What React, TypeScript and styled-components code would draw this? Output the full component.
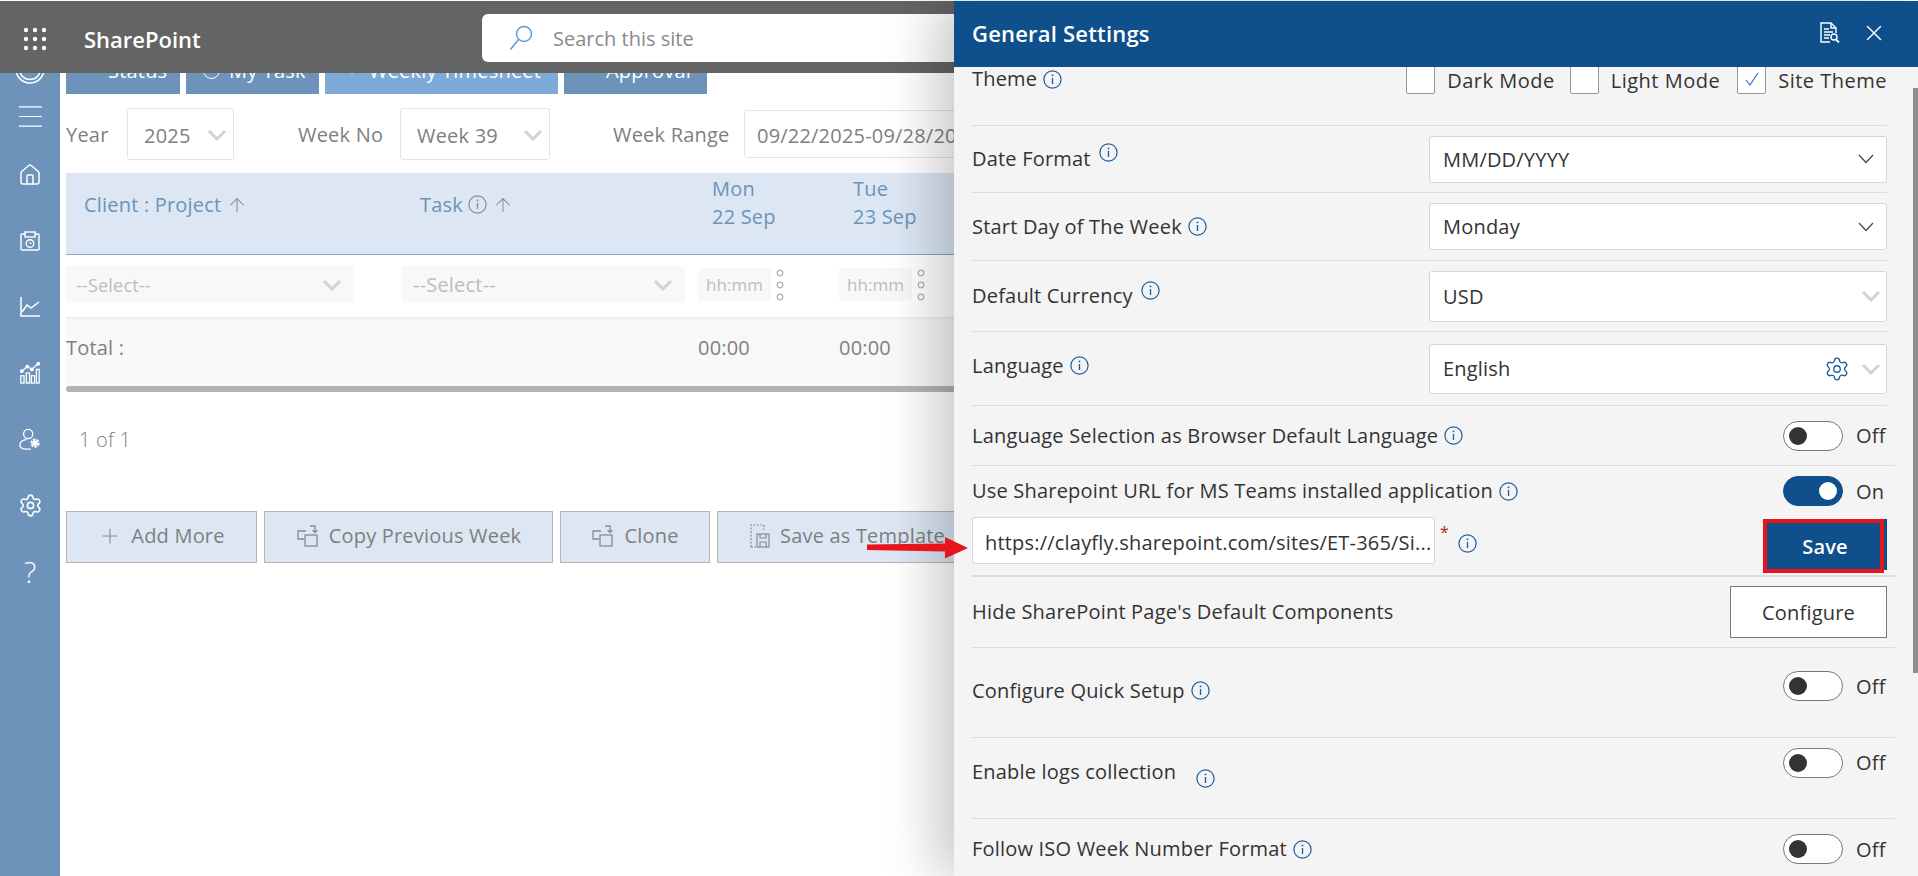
import React from "react";
import styled, { createGlobalStyle } from "styled-components";
import { ArrowUp, House, Menu, Plus, Settings, X } from "lucide-react";

const GlobalStyle = createGlobalStyle`
  html, body { margin: 0; padding: 0; background: #fff; }
  * { box-sizing: border-box; }
  body { font-family: "Open Sans", "Noto Sans", sans-serif; }
`;

const BLUE = "#0f4f8b";
const STEEL = "#6d93ba";

const Info = ({ color = "#1c5c9e", size = 19 }: { color?: string; size?: number }) => (
  <svg width={size} height={size} viewBox="0 0 19 19" fill="none" stroke={color} strokeWidth="1.2" style={{ flexShrink: 0 }}>
    <circle cx="9.5" cy="9.5" r="8.6" />
    <path d="M9.5 8v6" strokeWidth="1.3" />
    <circle cx="9.5" cy="5.4" r="0.9" fill={color} stroke="none" />
  </svg>
);

const Chevron = ({ bold }: { bold?: boolean }) =>
  bold ? (
    <svg width="20" height="12" viewBox="0 0 20 12" fill="none" stroke="#d2d2d2" strokeWidth="3">
      <path d="M2 2l8 8 8-8" />
    </svg>
  ) : (
    <svg width="24" height="12" viewBox="0 0 24 12" fill="none" stroke="#444" strokeWidth="1.2">
      <path d="M2 2l7 7.5L16 2" />
    </svg>
  );

const Dots = () => (
  <svg width="8" height="32" viewBox="0 0 8 32" fill="none" stroke="#b5b5b5" strokeWidth="1.3">
    <circle cx="4" cy="4" r="2.8" />
    <circle cx="4" cy="16" r="2.8" />
    <circle cx="4" cy="28" r="2.8" />
  </svg>
);

const CopyIcon = () => (
  <svg width="24" height="24" viewBox="0 0 24 24" fill="none" stroke="#8a8a8a" strokeWidth="1.3">
    <path d="M8 15H2V7h8" />
    <rect x="9" y="11" width="12" height="11" />
    <path d="M14 2h5v6m-2.500-2 2.500 2.500L21.500 6" />
  </svg>
);

const TemplateIcon = () => (
  <svg width="22" height="26" viewBox="0 0 22 26" fill="none" stroke="#8a8a8a" strokeWidth="1.2">
    <path d="M2 24V2h13v5" strokeDasharray="2 1.500" />
    <path d="M2 24h5" strokeDasharray="2 1.500" />
    <rect x="8" y="11" width="12" height="13" />
    <path d="M11 11v4h6v-4M11 24v-5h6v5" />
  </svg>
);

const CalendarIcon = () => (
  <svg width="20" height="20" viewBox="0 0 20 20" fill="none" stroke="#fff" strokeWidth="1.400">
    <rect x="1" y="3" width="18" height="16" rx="1" />
    <rect x="5" y="1" width="10" height="5" fill="#6d93ba" />
    <circle cx="10" cy="12.500" r="3.800" />
    <path d="M10 10.800v1.700h1.500" strokeWidth="1" />
  </svg>
);

const ChartIcon = () => (
  <svg width="22" height="22" viewBox="0 0 22 22" fill="none" stroke="#fff" strokeWidth="1.500">
    <path d="M2 1v19h19" />
    <path d="M3 16l5-7 4 3 8-6" />
  </svg>
);

const BarsIcon = () => (
  <svg width="22" height="22" viewBox="0 0 22 24" fill="none" stroke="#fff" strokeWidth="1.400">
    <rect x="1" y="15" width="3.500" height="8" />
    <rect x="7" y="12" width="3.500" height="11" />
    <rect x="12.500" y="15" width="3.500" height="8" />
    <rect x="18" y="8" width="3" height="15" />
    <path d="M2 10l6-5 5 3 7-6" />
    <circle cx="2" cy="10" r="1.400" fill="#fff" />
    <circle cx="8" cy="5" r="1.400" fill="#fff" />
    <circle cx="13" cy="8" r="1.400" fill="#fff" />
    <circle cx="20" cy="2" r="1.400" fill="#fff" />
  </svg>
);

const UserCogIcon = () => (
  <svg width="22" height="22" viewBox="0 0 24 24" fill="none" stroke="#fff" strokeWidth="1.500">
    <circle cx="10" cy="6.500" r="5" />
    <path d="M8 12.500c-4 .500-7 3-7 6 0 3 3 4.500 7 4.500h5" />
    <circle cx="17.500" cy="16.500" r="3.500" strokeWidth="3" strokeDasharray="2.500 1" />
    <circle cx="17.500" cy="16.500" r="2.500" fill="#fff" stroke="none" />
  </svg>
);

const ReportIcon = () => (
  <svg width="20" height="22" viewBox="0 0 20 22" fill="none" stroke="#fff" strokeWidth="1.400">
    <path d="M10 20H1V1h10l5 5v5" />
    <path d="M11 1v5h5" />
    <path d="M4 7h5M4 10h9M4 13h6M4 16h5" />
    <circle cx="14" cy="15" r="3" />
    <path d="M16 17.500l3 3" strokeWidth="1.800" />
  </svg>
);

const SearchGlyph = () => (
  <svg width="24" height="26" viewBox="0 0 24 26" fill="none" stroke="#5b9bd5" strokeWidth="1.500">
    <circle cx="15" cy="9" r="7.500" />
    <path d="M9.500 14.500L1.500 24.500" />
  </svg>
);

const Waffle = () => (
  <svg width="24" height="24" viewBox="0 0 24 24" fill="#fff">
    {[3, 12, 21].map((y) => [3, 12, 21].map((x) => <circle key={`${x}-${y}`} cx={x} cy={y} r="2.200" />))}
  </svg>
);

export default function App() {
  return (
    <Page>
      <GlobalStyle />
      <TopBar>
        <WaffleSlot>
          <Waffle />
        </WaffleSlot>
        <Brand>SharePoint</Brand>
        <SearchBox>
          <SearchGlyph />
          <span>Search this site</span>
        </SearchBox>
      </TopBar>

      <Body>
        <Sidebar>
          <SideSlot $gap={-24}>
            <svg width="30" height="40" viewBox="0 0 30 40" fill="none" stroke="#fff" strokeWidth="1.500">
              <circle cx="15" cy="20" r="14" />
              <circle cx="15" cy="20" r="10.500" />
            </svg>
          </SideSlot>
          <SideSlot $gap={7}>
            <Menu size={33} color="#fff" strokeWidth={0.9} />
          </SideSlot>
          <SideSlot $gap={19}>
            <House size={24} color="#fff" strokeWidth={1.500} />
          </SideSlot>
          <SideSlot $gap={26}>
            <CalendarIcon />
          </SideSlot>
          <SideSlot $gap={26}>
            <ChartIcon />
          </SideSlot>
          <SideSlot $gap={26}>
            <BarsIcon />
          </SideSlot>
          <SideSlot $gap={26}>
            <UserCogIcon />
          </SideSlot>
          <SideSlot $gap={26}>
            <Settings size={25} color="#fff" strokeWidth={1.500} />
          </SideSlot>
          <SideSlot $gap={26}>
            <Question>?</Question>
          </SideSlot>
        </Sidebar>

        <Main>
          <Tabs>
            <Tab $w={114} $pad={42}>Status</Tab>
            <Tab $w={133} $pad={17}>
              <TabCircle />
              My Task
            </Tab>
            <Tab $w={233} $pad={19} $active>
              <TabMark>+</TabMark>
              Weekly Timesheet
            </Tab>
            <Tab $w={143} $pad={42}>Approval</Tab>
          </Tabs>

          <Filters>
            <FilterLabel $w={61}>Year</FilterLabel>
            <FilterSelect $w={107}>
              2025
              <Chevron bold />
            </FilterSelect>
            <FilterLabel $w={102} $gap={64}>Week No</FilterLabel>
            <FilterSelect $w={150}>
              Week 39
              <Chevron bold />
            </FilterSelect>
            <FilterLabel $w={131} $gap={63}>Week Range</FilterLabel>
            <RangeInput>09/22/2025-09/28/2025</RangeInput>
          </Filters>

          <TableHead>
            <HeadCell>
              Client : Project <ArrowUp size={22} color="#8a8a8a" strokeWidth={1.100} />
            </HeadCell>
            <HeadCell>
              Task <Info color="#8a8a8a" /> <ArrowUp size={22} color="#8a8a8a" strokeWidth={1.100} />
            </HeadCell>
            <DayCell>
              Mon
              <br />
              22 Sep
            </DayCell>
            <DayCell>
              Tue
              <br />
              23 Sep
            </DayCell>
          </TableHead>

          <TableRow>
            <GhostSelect $w={288} $small>
              --Select--
              <Chevron bold />
            </GhostSelect>
            <GhostSelect $w={283}>
              --Select--
              <Chevron bold />
            </GhostSelect>
            <TimeCell>
              <TimeInput>hh:mm</TimeInput>
              <Dots />
            </TimeCell>
            <TimeCell>
              <TimeInput>hh:mm</TimeInput>
              <Dots />
            </TimeCell>
          </TableRow>

          <TotalRow>
            <span>Total :</span>
            <span />
            <span>00:00</span>
            <span>00:00</span>
          </TotalRow>
          <HScroll />

          <Pager>1 of 1</Pager>

          <Actions>
            <ActionButton $w={191}>
              <Plus size={24} color="#8a8a8a" strokeWidth={1.100} />
              Add More
            </ActionButton>
            <ActionButton $w={289}>
              <CopyIcon />
              Copy Previous Week
            </ActionButton>
            <ActionButton $w={150}>
              <CopyIcon />
              Clone
            </ActionButton>
            <ActionButton $w={260}>
              <TemplateIcon />
              Save as Template
            </ActionButton>
          </Actions>
        </Main>
      </Body>

      <RedArrow width="101" height="22" viewBox="0 0 101 22">
        <path d="M0 7.500l78-1V0l23 11-23 10.500V14.500L0 13z" fill="#e8141c" />
      </RedArrow>

      <Panel>
        <PanelHeader>
          <PanelTitle>General Settings</PanelTitle>
          <HeaderIcons>
            <ReportIcon />
            <X size={26} color="#fff" strokeWidth={1.300} />
          </HeaderIcons>
        </PanelHeader>

        <PanelBody>
          <ScrollThumb />

          <Row $h={59} $top>
            <Label>
              Theme <Info />
            </Label>
            <ThemeChoices>
              <CheckBox />
              <ChoiceText>Dark Mode</ChoiceText>
              <CheckBox $space={15} />
              <ChoiceText>Light Mode</ChoiceText>
              <CheckBox $space={17}>
                <svg width="18" height="18" viewBox="0 0 18 18" fill="none" stroke="#2b78c5" strokeWidth="1.200">
                  <path d="M3 10l4 5 8-12" />
                </svg>
              </CheckBox>
              <ChoiceText>Site Theme</ChoiceText>
            </ThemeChoices>
          </Row>

          <Row $h={67}>
            <Label>
              Date Format
              <RaisedInfo $lift={14}>
                <Info />
              </RaisedInfo>
            </Label>
            <SelectBox $h={47}>
              MM/DD/YYYY
              <Chevron />
            </SelectBox>
          </Row>

          <Row $h={68}>
            <Label>
              Start Day of The Week <Info />
            </Label>
            <SelectBox $h={47}>
              Monday
              <Chevron />
            </SelectBox>
          </Row>

          <Row $h={71}>
            <Label>
              Default Currency
              <RaisedInfo $lift={12}>
                <Info />
              </RaisedInfo>
            </Label>
            <SelectBox $h={51}>
              USD
              <Chevron bold />
            </SelectBox>
          </Row>

          <Row $h={74}>
            <Label $lift={6}>
              Language <Info />
            </Label>
            <SelectBox $h={50}>
              English
              <SelectTools>
                <Settings size={26} color="#1c5c9e" strokeWidth={1.200} />
                <Chevron bold />
              </SelectTools>
            </SelectBox>
          </Row>

          <Row $h={60} $wide>
            <Label>
              Language Selection as Browser Default Language <Info />
            </Label>
            <ToggleWrap>
              <Toggle />
              Off
            </ToggleWrap>
          </Row>

          <StackRow>
            <StackLine>
              <Label>
                Use Sharepoint URL for MS Teams installed application <Info />
              </Label>
              <ToggleWrap>
                <Toggle $on />
                On
              </ToggleWrap>
            </StackLine>
            <UrlLine>
              <UrlGroup>
                <UrlInput>https://clayfly.sharepoint.com/sites/ET-365/Si...</UrlInput>
                <Required>*</Required>
                <UrlInfo>
                  <Info />
                </UrlInfo>
              </UrlGroup>
              <SaveButton>
                Save
                <RedOutline />
              </SaveButton>
            </UrlLine>
          </StackRow>

          <Row $h={71} $wide>
            <Label>Hide SharePoint Page's Default Components</Label>
            <ConfigureButton>Configure</ConfigureButton>
          </Row>

          <Row $h={90} $wide>
            <Label $lift={4}>
              Configure Quick Setup <Info />
            </Label>
            <ToggleWrap $lift={13}>
              <Toggle />
              Off
            </ToggleWrap>
          </Row>

          <Row $h={81} $wide>
            <Label>
              <LiftedText>Enable logs collection</LiftedText>
              <LogsGap />
              <Info />
            </Label>
            <ToggleWrap $lift={31}>
              <Toggle />
              Off
            </ToggleWrap>
          </Row>

          <Row $h={61} $wide>
            <Label $lift={0}>
              Follow ISO Week Number Format <Info />
            </Label>
            <ToggleWrap $lift={0}>
              <Toggle />
              Off
            </ToggleWrap>
          </Row>
        </PanelBody>
      </Panel>
    </Page>
  );
}

const Page = styled.div`
  position: relative;
  width: 1918px;
  height: 876px;
  padding-top: 1px;
  overflow: hidden;
  background: #fff;
`;

const TopBar = styled.header`
  position: relative;
  z-index: 2;
  height: 72px;
  display: flex;
  align-items: center;
  background: #646464;
`;

const WaffleSlot = styled.div`
  width: 84px;
  padding-left: 23px;
  display: flex;
  margin-top: 3px;
`;

const Brand = styled.div`
  width: 398px;
  font-size: 22px;
  font-weight: 600;
  color: #fff;
  margin-top: 3px;
`;

const SearchBox = styled.div`
  flex: 1;
  height: 48px;
  margin-top: 2px;
  display: flex;
  align-items: center;
  gap: 20px;
  padding-left: 27px;
  border-radius: 6px 0 0 6px;
  background: #fff;
  font-size: 20px;
  color: #8a8a8a;
`;

const Body = styled.div`
  display: flex;
  height: 803px;
`;

const Sidebar = styled.nav`
  width: 60px;
  flex-shrink: 0;
  display: flex;
  flex-direction: column;
  align-items: center;
  background: ${STEEL};
`;

const SideSlot = styled.div<{ $gap: number }>`
  height: 40px;
  margin-top: ${(p) => p.$gap}px;
  display: flex;
  align-items: center;
  justify-content: center;
`;

const Question = styled.span`
  font-size: 29px;
  font-weight: 300;
  color: #fff;
`;

const Main = styled.main`
  flex: 1;
  min-width: 0;
  padding-left: 6px;
  color: #7f7f7f;
  font-size: 20px;
  letter-spacing: 0.2px;
`;

const Tabs = styled.div`
  display: flex;
  gap: 6px;
  height: 48px;
  margin-top: -27px;
`;

const Tab = styled.div<{ $w: number; $pad: number; $active?: boolean }>`
  width: ${(p) => p.$w}px;
  padding-left: ${(p) => p.$pad}px;
  display: flex;
  align-items: center;
  gap: 9px;
  color: #fff;
  background: ${(p) => (p.$active ? "#7eaad7" : STEEL)};
`;

const TabCircle = styled.span`
  width: 17px;
  height: 17px;
  border: 1.5px solid #fff;
  border-radius: 50%;
`;

const TabMark = styled.span`
  width: 16px;
  font-size: 12px;
  text-align: center;
`;

const Filters = styled.div`
  height: 79px;
  display: flex;
  align-items: center;
  font-weight: 500;
`;

const FilterLabel = styled.div<{ $w: number; $gap?: number }>`
  width: ${(p) => p.$w}px;
  margin-left: ${(p) => p.$gap ?? 0}px;
  padding-top: 1px;
`;

const FilterSelect = styled.div<{ $w: number }>`
  width: ${(p) => p.$w}px;
  height: 52px;
  display: flex;
  align-items: center;
  justify-content: space-between;
  padding: 3px 6px 0 16px;
  border: 1px solid #e4e4e4;
  border-radius: 3px;
  background: #fff;
  font-weight: 400;
`;

const RangeInput = styled.div`
  width: 300px;
  height: 48px;
  display: flex;
  align-items: center;
  padding: 3px 0 0 12px;
  border: 1px solid #e4e4e4;
  border-radius: 3px;
  white-space: nowrap;
  font-weight: 400;
`;

const tableColumns = "336px 296px 141px 141px";

const TableHead = styled.div`
  height: 82px;
  display: grid;
  grid-template-columns: ${tableColumns};
  background: #dce7f3;
  border-bottom: 1px solid #7eaad7;
  color: ${STEEL};
  font-weight: 500;
`;

const HeadCell = styled.div`
  display: flex;
  align-items: center;
  gap: 5px;
  padding: 0 0 18px 18px;
`;

const DayCell = styled.div`
  padding: 2px 0 0 14px;
  line-height: 28px;
  font-weight: 500;
`;

const TableRow = styled.div`
  height: 64px;
  display: grid;
  grid-template-columns: ${tableColumns};
  align-items: center;
  border-bottom: 2px solid #eee;
  padding-bottom: 3px;
`;

const GhostSelect = styled.div<{ $w: number; $small?: boolean }>`
  width: ${(p) => p.$w}px;
  height: 37px;
  display: flex;
  align-items: center;
  justify-content: space-between;
  padding: 0 12px 0 ${(p) => (p.$small ? 10 : 11)}px;
  border-radius: 3px;
  background: #f8f8f8;
  color: #bdbdbd;
  font-size: ${(p) => (p.$small ? 18 : 20)}px;
`;

const TimeCell = styled.div`
  display: flex;
  align-items: center;
  gap: 5px;
`;

const TimeInput = styled.div`
  width: 73px;
  height: 33px;
  display: flex;
  align-items: center;
  justify-content: center;
  border-radius: 3px;
  background: #f8f8f8;
  color: #bdbdbd;
  font-size: 17px;
  letter-spacing: 0;
`;

const TotalRow = styled.div`
  height: 67px;
  display: grid;
  grid-template-columns: ${tableColumns};
  align-items: center;
  background: #f8f8f8;
  font-weight: 500;
  padding-bottom: 11px;
`;

const HScroll = styled.div`
  height: 6px;
  border-radius: 3px;
  background: #b3b3b3;
`;

const Pager = styled.div`
  height: 119px;
  display: flex;
  align-items: center;
  padding: 0 0 24px 13px;
  font-weight: 300;
  color: #7f7f7f;
`;

const Actions = styled.div`
  display: flex;
  gap: 7px;
`;

const ActionButton = styled.div<{ $w: number }>`
  width: ${(p) => p.$w}px;
  height: 52px;
  flex-shrink: 0;
  display: flex;
  align-items: center;
  justify-content: center;
  gap: 9px;
  padding-bottom: 3px;
  border: 1.5px solid #b5b5b5;
  background: #dce7f3;
  font-weight: 500;
  white-space: nowrap;
`;

const RedArrow = styled.svg`
  position: absolute;
  left: 867px;
  top: 537px;
  z-index: 5;
`;

const Panel = styled.aside`
  position: absolute;
  z-index: 4;
  top: 1px;
  right: 0;
  width: 964px;
  height: 875px;
  background: #f4f4f4;
  box-shadow: -18px 0 50px rgba(0, 0, 0, 0.22);
  color: #333;
  font-size: 20px;
  letter-spacing: 0.2px;
`;

const PanelHeader = styled.div`
  position: relative;
  z-index: 1;
  height: 66px;
  display: flex;
  align-items: center;
  justify-content: space-between;
  padding: 0 31px 2px 18px;
  background: ${BLUE};
  color: #fff;
`;

const PanelTitle = styled.div`
  font-size: 22px;
  font-weight: 600;
`;

const HeaderIcons = styled.div`
  display: flex;
  align-items: center;
  gap: 21px;
`;

const PanelBody = styled.div`
  position: relative;
  height: 809px;
  padding-left: 18px;
`;

const ScrollThumb = styled.div`
  position: absolute;
  top: 21px;
  right: 0;
  width: 5px;
  height: 585px;
  background: #8c8c8c;
`;

const Row = styled.div<{ $h: number; $wide?: boolean; $top?: boolean }>`
  width: ${(p) => (p.$wide ? 923 : 915)}px;
  height: ${(p) => p.$h}px;
  display: flex;
  align-items: ${(p) => (p.$top ? "flex-start" : "center")};
  justify-content: space-between;
  padding-right: ${(p) => (p.$wide ? 8 : 0)}px;
  border-bottom: 1px solid #ddd;
`;

const Label = styled.div<{ $lift?: number }>`
  display: flex;
  align-items: center;
  gap: 6px;
  margin-bottom: ${(p) => p.$lift ?? 0}px;
  line-height: 24px;
`;

const RaisedInfo = styled.span<{ $lift: number }>`
  display: flex;
  margin: 0 0 ${(p) => p.$lift}px 2px;
`;

const LiftedText = styled.span`
  margin-bottom: 12px;
`;

const LogsGap = styled.span`
  width: 8px;
`;

const ThemeChoices = styled.div`
  display: flex;
  align-items: center;
  margin-top: -3px;
`;

const CheckBox = styled.div<{ $space?: number }>`
  width: 29px;
  height: 30px;
  margin-left: ${(p) => p.$space ?? 0}px;
  display: flex;
  align-items: center;
  justify-content: center;
  border: 1px solid #999;
  border-radius: 2px;
  background: #fff;
`;

const ChoiceText = styled.span`
  margin: 3px 0 0 12px;
  letter-spacing: 0.5px;
`;

const SelectBox = styled.div<{ $h: number }>`
  width: 458px;
  height: ${(p) => p.$h}px;
  display: flex;
  align-items: center;
  justify-content: space-between;
  padding: 0 5px 0 13px;
  border: 1px solid #d6d6d6;
  border-radius: 3px;
  background: #fff;
`;

const SelectTools = styled.span`
  display: flex;
  align-items: center;
  gap: 11px;
`;

const ToggleWrap = styled.div<{ $lift?: number }>`
  display: flex;
  align-items: center;
  gap: 13px;
  width: 104px;
  margin-bottom: ${(p) => p.$lift ?? 0}px;
`;

const Toggle = styled.span<{ $on?: boolean }>`
  width: 60px;
  height: 30px;
  display: flex;
  align-items: center;
  justify-content: ${(p) => (p.$on ? "flex-end" : "flex-start")};
  padding: 0 5px;
  border: 1px solid ${(p) => (p.$on ? BLUE : "#777")};
  border-radius: 15px;
  background: ${(p) => (p.$on ? BLUE : "#fff")};

  &::after {
    content: "";
    width: 18px;
    height: 18px;
    border-radius: 50%;
    background: ${(p) => (p.$on ? "#fff" : "#333")};
  }
`;

const StackRow = styled.div`
  width: 923px;
  height: 111px;
  padding-right: 8px;
  border-bottom: 2px solid #ddd;
`;

const StackLine = styled.div`
  height: 50px;
  display: flex;
  align-items: center;
  justify-content: space-between;
`;

const UrlLine = styled.div`
  display: flex;
  align-items: flex-start;
  justify-content: space-between;
`;

const UrlGroup = styled.div`
  display: flex;
  align-items: center;
  margin-top: 1px;
`;

const UrlInput = styled.div`
  width: 463px;
  height: 47px;
  display: flex;
  align-items: center;
  padding: 3px 0 0 12px;
  border: 1px solid #d6d6d6;
  border-radius: 3px;
  background: #fff;
  white-space: nowrap;
`;

const Required = styled.span`
  width: 18px;
  margin: 0 0 18px 5px;
  color: #b3262c;
  font-size: 16px;
`;

const UrlInfo = styled.span`
  display: flex;
  margin-top: 5px;
`;

const SaveButton = styled.div`
  position: relative;
  width: 124px;
  height: 51px;
  margin-top: 3px;
  display: flex;
  align-items: center;
  justify-content: center;
  padding-top: 3px;
  background: ${BLUE};
  color: #fff;
  font-weight: 600;
`;

const RedOutline = styled.span`
  position: absolute;
  top: 0;
  left: 0;
  width: 121px;
  height: 54px;
  border: 4px solid #e8141c;
`;

const ConfigureButton = styled.div`
  width: 157px;
  height: 52px;
  display: flex;
  align-items: center;
  justify-content: center;
  border: 1px solid #777;
  background: #fff;
  font-weight: 500;
`;
